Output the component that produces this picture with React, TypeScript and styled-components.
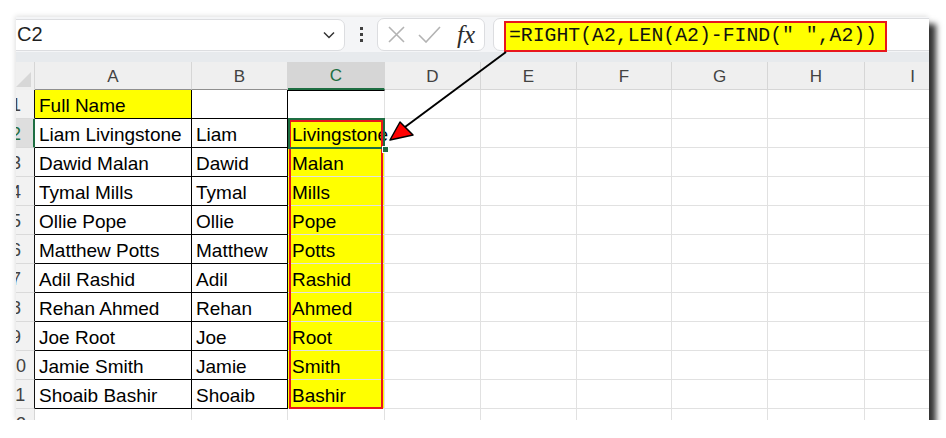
import styled, { createGlobalStyle } from 'styled-components'

const GlobalStyle = createGlobalStyle`
  body {
    margin: 0;
    background: #ffffff;
    font-family: 'Liberation Sans', Arial, sans-serif;
  }
`

const COLS = ['A', 'B', 'C', 'D', 'E', 'F', 'G', 'H', 'I']
const WIDTHS = [157, 96, 97, 96, 96, 95, 96, 97, 96]

const rows: string[][] = [
  ['Full Name', '', ''],
  ['Liam Livingstone', 'Liam', 'Livingstone'],
  ['Dawid Malan', 'Dawid', 'Malan'],
  ['Tymal Mills', 'Tymal', 'Mills'],
  ['Ollie Pope', 'Ollie', 'Pope'],
  ['Matthew Potts', 'Matthew', 'Potts'],
  ['Adil Rashid', 'Adil', 'Rashid'],
  ['Rehan Ahmed', 'Rehan', 'Ahmed'],
  ['Joe Root', 'Joe', 'Root'],
  ['Jamie Smith', 'Jamie', 'Smith'],
  ['Shoaib Bashir', 'Shoaib', 'Bashir'],
  ['', '', ''],
]

const Window = styled.div`
  position: relative;
  margin: 17px 0 0 16px;
  width: 913px;
  height: 403px;
  overflow: hidden;
  background: #fff;
  box-shadow: 7px 7px 6px rgba(0, 0, 0, 0.8), -1px -1px 5px rgba(0, 0, 0, 0.12);
`

const FormulaBar = styled.div`
  display: flex;
  align-items: center;
  height: 35px;
  background: #f4f5f7;
`

const Strip = styled.div`
  height: 10px;
  background: #e7eaed;
`

const NameBox = styled.div`
  box-sizing: border-box;
  display: flex;
  align-items: center;
  justify-content: space-between;
  margin-left: -10px;
  width: 339px;
  height: 32px;
  padding: 0 9px 0 10px;
  background: #fff;
  border: 1px solid #dcdde0;
  border-radius: 7px;
  font-size: 20px;
  color: #1f1f1f;
`

const Dots = styled.div`
  width: 32px;
  display: flex;
  flex-direction: column;
  align-items: center;
  gap: 3px;

  span {
    width: 3px;
    height: 3px;
    background: #404040;
  }
`

const FuncBox = styled.div`
  box-sizing: border-box;
  display: flex;
  align-items: center;
  width: 108px;
  height: 33px;
  padding-left: 10px;
  gap: 13px;
  background: #fff;
  border: 1px solid #dcdde0;
  border-radius: 7px;
`

const Fx = styled.span`
  margin-left: 3px;
  font-family: 'Liberation Serif', 'Times New Roman', serif;
  font-style: italic;
  font-size: 25px;
  color: #2b2b2b;
  line-height: 1;
`

const FormulaBox = styled.div`
  box-sizing: border-box;
  flex: 1;
  display: flex;
  align-items: center;
  height: 33px;
  margin: 0 -10px 0 8px;
  padding-left: 10px;
  background: #fff;
  border: 1px solid #dcdde0;
  border-radius: 7px;
`

const Highlight = styled.span`
  box-sizing: border-box;
  height: 31px;
  margin-top: 4px;
  padding: 0 8px 0 3px;
  background: #ffff00;
  border: 2px solid #e8161d;
  font-family: 'Liberation Mono', 'Courier New', monospace;
  font-size: 19.8px;
  line-height: 27px;
  color: #111;
  white-space: pre;
`

const Sheet = styled.div`
  position: relative;
  display: grid;
  grid-template-columns: 19px ${WIDTHS.map((w) => `${w}px`).join(' ')};
  grid-template-rows: 28px repeat(12, 29px);
`

const Corner = styled.div`
  background: #efefef;
  border-right: 1px solid #d6d6d6;
  box-sizing: border-box;
  display: flex;
  align-items: flex-end;
  justify-content: flex-end;
  padding: 0 3px 3px 0;
`

const ColHead = styled.div<{ $active?: boolean; $edge?: boolean }>`
  box-sizing: border-box;
  display: flex;
  align-items: center;
  justify-content: center;
  padding-top: 2px;
  font-size: 17px;
  background: ${({ $active }) => ($active ? '#d6d6d6' : '#efefef')};
  color: ${({ $active }) => ($active ? '#1e6e42' : '#424242')};
  border-right: 1px solid #d6d6d6;
  border-bottom: ${({ $active, $edge }) =>
    $active ? '2px solid #1e6e42' : $edge ? '1px solid #8f8f8f' : '1px solid #d6d6d6'};
`

const RowHead = styled.div<{ $active?: boolean; $edge?: boolean }>`
  box-sizing: border-box;
  overflow: hidden;
  font-size: 18px;
  line-height: 30px;
  background: ${({ $active }) => ($active ? '#dedede' : '#f2f2f2')};
  color: ${({ $active }) => ($active ? '#1e6e42' : '#424242')};
  border-bottom: 1px solid #dadada;
  border-right: ${({ $active, $edge }) =>
    $active ? '2px solid #1e6e42' : $edge ? '1px solid #111' : '1px solid #d6d6d6'};

  span {
    display: block;
    width: 30px;
    margin-left: -15px;
    text-align: center;
  }
`

const Cell = styled.div<{ $boxed?: boolean; $fill?: boolean; $top?: boolean }>`
  box-sizing: border-box;
  padding: 2px 0 0 4px;
  font-size: 19px;
  line-height: 27px;
  color: #000;
  white-space: nowrap;
  background: ${({ $fill }) => ($fill ? '#ffff00' : 'transparent')};
  border-right: 1px solid ${({ $boxed }) => ($boxed ? '#000' : '#e1e1e1')};
  border-bottom: 1px solid ${({ $boxed }) => ($boxed ? '#000' : '#e1e1e1')};
  border-top: ${({ $top }) => ($top ? '1px solid #000' : 'none')};
`

const RangeOutline = styled.div`
  position: absolute;
  left: 273px;
  top: 58px;
  width: 94px;
  height: 289px;
  box-sizing: border-box;
  border: 2px solid #e8161d;
  pointer-events: none;
`

const Selection = styled.div`
  position: absolute;
  left: 272px;
  top: 56px;
  width: 97px;
  height: 31px;
  box-sizing: border-box;
  border: 2px solid #1e6e42;
  pointer-events: none;
`

const Handle = styled.div`
  position: absolute;
  left: 366px;
  top: 84px;
  width: 7px;
  height: 7px;
  box-sizing: border-box;
  background: #1e6e42;
  border: 1px solid #fff;
`

const Arrow = styled.svg`
  position: absolute;
  left: 0;
  top: 0;
  pointer-events: none;
`

function App() {
  return (
    <>
      <GlobalStyle />
      <Window>
        <FormulaBar>
          <NameBox>
            <span>C2</span>
            <svg width="12" height="8" viewBox="0 0 12 8">
              <path d="M1 1.5 L6 6.5 L11 1.5" fill="none" stroke="#333" strokeWidth="1.5" />
            </svg>
          </NameBox>
          <Dots>
            <span />
            <span />
            <span />
          </Dots>
          <FuncBox>
            <svg width="17" height="17" viewBox="0 0 17 17">
              <path d="M1 1 L16 16 M16 1 L1 16" stroke="#b3b3b3" strokeWidth="1.6" />
            </svg>
            <svg width="23" height="17" viewBox="0 0 23 17">
              <path d="M1 9 L8 16 L22 1" fill="none" stroke="#b3b3b3" strokeWidth="1.6" />
            </svg>
            <Fx>fx</Fx>
          </FuncBox>
          <FormulaBox>
            <Highlight>=RIGHT(A2,LEN(A2)-FIND(" ",A2))</Highlight>
          </FormulaBox>
        </FormulaBar>
        <Strip />
        <Sheet>
          <Corner>
            <svg width="15" height="15" viewBox="0 0 15 15">
              <path d="M15 0 L15 15 L0 15 Z" fill="#d7d7d7" />
            </svg>
          </Corner>
          {COLS.map((c, i) => (
            <ColHead key={c} $active={c === 'C'} $edge={i < 2}>
              {c}
            </ColHead>
          ))}
          {rows.map((r, ri) => {
            const n = ri + 1
            const data = n <= 11
            return [
              <RowHead key={`h${n}`} $active={n === 2} $edge={data}>
                <span>{n}</span>
              </RowHead>,
              ...COLS.map((c, ci) => {
                const text = ci < 3 ? r[ci] : ''
                return (
                  <Cell
                    key={`${c}${n}`}
                    $boxed={data && ci < 2}
                    $fill={(ci === 0 && n === 1) || (ci === 2 && n >= 2 && n <= 11)}
                    $top={ci === 2 && n === 1}
                  >
                    {text}
                  </Cell>
                )
              }),
            ]
          })}
          <RangeOutline />
          <Selection />
          <Handle />
        </Sheet>
        <Arrow width="913" height="403" viewBox="0 0 913 403">
          <line x1="490" y1="35" x2="389" y2="110" stroke="#000" strokeWidth="2" />
          <polygon points="374,123 384,105 397,118" fill="#ff0000" stroke="#000" strokeWidth="1.5" strokeLinejoin="round" />
        </Arrow>
      </Window>
    </>
  )
}

export default App
